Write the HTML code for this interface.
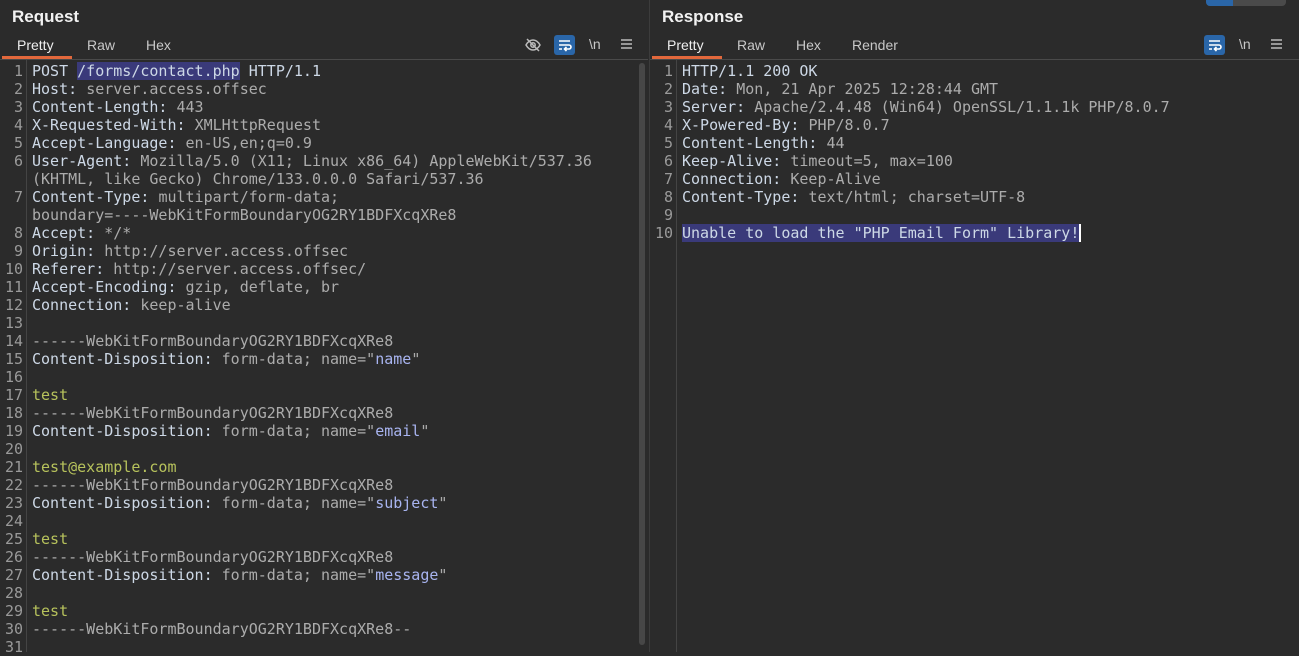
<!DOCTYPE html>
<html><head><meta charset="utf-8"><style>
*{margin:0;padding:0;box-sizing:border-box}
body{width:1299px;height:652px;background:#2b2b2b;overflow:hidden;position:relative;font-family:"Liberation Sans",sans-serif;color:#e8e8e8}
.abs{position:absolute}
.title{font-size:17px;font-weight:bold;color:#f2f2f2;top:7px}
.tab{font-size:14px;color:#c8c8c8;top:37px}
.ul{height:3px;background:#e2683c;top:56px}
.sep{height:1px;background:#4a4a4a;top:59px}
.code{font-family:"DejaVu Sans Mono","Liberation Mono",monospace;font-size:15px;line-height:18px;white-space:pre;top:62px}
.num{color:#9a9a9a;text-align:right}
.k{color:#cdd8e6}.v{color:#acacac}.n{color:#a8b4f0}.t{color:#b7c25c}
.sel{background:#3a3a7a}
.ic{color:#c8c8c8;font-size:14px}
</style></head><body>
<div class="abs title" style="left:12px">Request</div>
<div class="abs title" style="left:662px">Response</div>
<div class="abs" style="left:1206px;top:0;width:80px;height:6px;border-radius:0 0 4px 4px;background:#4a4a4a"></div>
<div class="abs" style="left:1206px;top:0;width:27px;height:6px;border-radius:0 0 0 4px;background:#2a66a8"></div>

<div class="abs tab" style="left:17px;color:#eee">Pretty</div>
<div class="abs tab" style="left:87px">Raw</div>
<div class="abs tab" style="left:146px">Hex</div>
<div class="abs ul" style="left:2px;width:70px"></div>
<div class="abs sep" style="left:0;width:648px"></div>

<div class="abs tab" style="left:667px;color:#eee">Pretty</div>
<div class="abs tab" style="left:737px">Raw</div>
<div class="abs tab" style="left:796px">Hex</div>
<div class="abs tab" style="left:852px">Render</div>
<div class="abs ul" style="left:652px;width:70px"></div>
<div class="abs sep" style="left:650px;width:649px"></div>

<div class="abs" style="left:649px;top:0;width:1px;height:652px;background:#3c3c3c"></div>
<div class="abs" style="left:26px;top:60px;width:1px;height:592px;background:#444"></div>
<div class="abs" style="left:676px;top:60px;width:1px;height:592px;background:#444"></div>
<div class="abs" style="left:639px;top:63px;width:6px;height:582px;border-radius:3px;background:#474747"></div>

<svg class="abs" style="left:524px;top:36px" width="18" height="18" viewBox="0 0 18 18" fill="none" stroke="#bbb" stroke-width="1.5"><path d="M2 9c2-3.5 4.5-5 7-5s5 1.5 7 5c-2 3.5-4.5 5-7 5s-5-1.5-7-5z"/><circle cx="9" cy="9" r="2.2"/><path d="M3 3l12 12"/></svg>
<div class="abs" style="left:554px;top:35px;width:21px;height:20px;border-radius:3px;background:#2a66a8"></div>
<svg class="abs" style="left:556px;top:37px" width="17" height="16" viewBox="0 0 17 16" fill="none" stroke="#fff" stroke-width="1.6"><path d="M3 4h11M3 8h10a2 2 0 0 1 0 4H9M10.5 10l-2 2 2 2M3 12h3"/></svg>
<div class="abs ic" style="left:589px;top:36px">\n</div>
<svg class="abs" style="left:620px;top:38px" width="13" height="12" viewBox="0 0 13 12" stroke="#bbb" stroke-width="1.5"><path d="M1 2h11M1 6h11M1 10h11"/></svg>

<div class="abs" style="left:1204px;top:35px;width:21px;height:20px;border-radius:3px;background:#2a66a8"></div>
<svg class="abs" style="left:1206px;top:37px" width="17" height="16" viewBox="0 0 17 16" fill="none" stroke="#fff" stroke-width="1.6"><path d="M3 4h11M3 8h10a2 2 0 0 1 0 4H9M10.5 10l-2 2 2 2M3 12h3"/></svg>
<div class="abs ic" style="left:1239px;top:36px">\n</div>
<svg class="abs" style="left:1270px;top:38px" width="13" height="12" viewBox="0 0 13 12" stroke="#bbb" stroke-width="1.5"><path d="M1 2h11M1 6h11M1 10h11"/></svg>

<div class="abs code num" style="left:0;width:23px">1
2
3
4
5
6

7

8
9
10
11
12
13
14
15
16
17
18
19
20
21
22
23
24
25
26
27
28
29
30
31</div>
<div class="abs code" style="left:32px"><span class="k">POST </span><span class="k sel">/forms/contact.php</span><span class="k"> HTTP/1.1</span>
<span class="k">Host: </span><span class="v">server.access.offsec</span>
<span class="k">Content-Length: </span><span class="v">443</span>
<span class="k">X-Requested-With: </span><span class="v">XMLHttpRequest</span>
<span class="k">Accept-Language: </span><span class="v">en-US,en;q=0.9</span>
<span class="k">User-Agent: </span><span class="v">Mozilla/5.0 (X11; Linux x86_64) AppleWebKit/537.36</span>
<span class="v">(KHTML, like Gecko) Chrome/133.0.0.0 Safari/537.36</span>
<span class="k">Content-Type: </span><span class="v">multipart/form-data;</span>
<span class="v">boundary=----WebKitFormBoundaryOG2RY1BDFXcqXRe8</span>
<span class="k">Accept: </span><span class="v">*/*</span>
<span class="k">Origin: </span><span class="v">http://server.access.offsec</span>
<span class="k">Referer: </span><span class="v">http://server.access.offsec/</span>
<span class="k">Accept-Encoding: </span><span class="v">gzip, deflate, br</span>
<span class="k">Connection: </span><span class="v">keep-alive</span>

<span class="v">------WebKitFormBoundaryOG2RY1BDFXcqXRe8</span>
<span class="k">Content-Disposition: </span><span class="v">form-data; name="</span><span class="n">name</span><span class="v">"</span>

<span class="t">test</span>
<span class="v">------WebKitFormBoundaryOG2RY1BDFXcqXRe8</span>
<span class="k">Content-Disposition: </span><span class="v">form-data; name="</span><span class="n">email</span><span class="v">"</span>

<span class="t">test@example.com</span>
<span class="v">------WebKitFormBoundaryOG2RY1BDFXcqXRe8</span>
<span class="k">Content-Disposition: </span><span class="v">form-data; name="</span><span class="n">subject</span><span class="v">"</span>

<span class="t">test</span>
<span class="v">------WebKitFormBoundaryOG2RY1BDFXcqXRe8</span>
<span class="k">Content-Disposition: </span><span class="v">form-data; name="</span><span class="n">message</span><span class="v">"</span>

<span class="t">test</span>
<span class="v">------WebKitFormBoundaryOG2RY1BDFXcqXRe8--</span>
</div>

<div class="abs code num" style="left:650px;width:23px">1
2
3
4
5
6
7
8
9
10</div>
<div class="abs code" style="left:682px"><span class="k">HTTP/1.1 200 OK</span>
<span class="k">Date: </span><span class="v">Mon, 21 Apr 2025 12:28:44 GMT</span>
<span class="k">Server: </span><span class="v">Apache/2.4.48 (Win64) OpenSSL/1.1.1k PHP/8.0.7</span>
<span class="k">X-Powered-By: </span><span class="v">PHP/8.0.7</span>
<span class="k">Content-Length: </span><span class="v">44</span>
<span class="k">Keep-Alive: </span><span class="v">timeout=5, max=100</span>
<span class="k">Connection: </span><span class="v">Keep-Alive</span>
<span class="k">Content-Type: </span><span class="v">text/html; charset=UTF-8</span>

<span class="k sel">Unable to load the "PHP Email Form" Library!</span><span style="border-left:2px solid #fff"></span></div>
</body></html>
